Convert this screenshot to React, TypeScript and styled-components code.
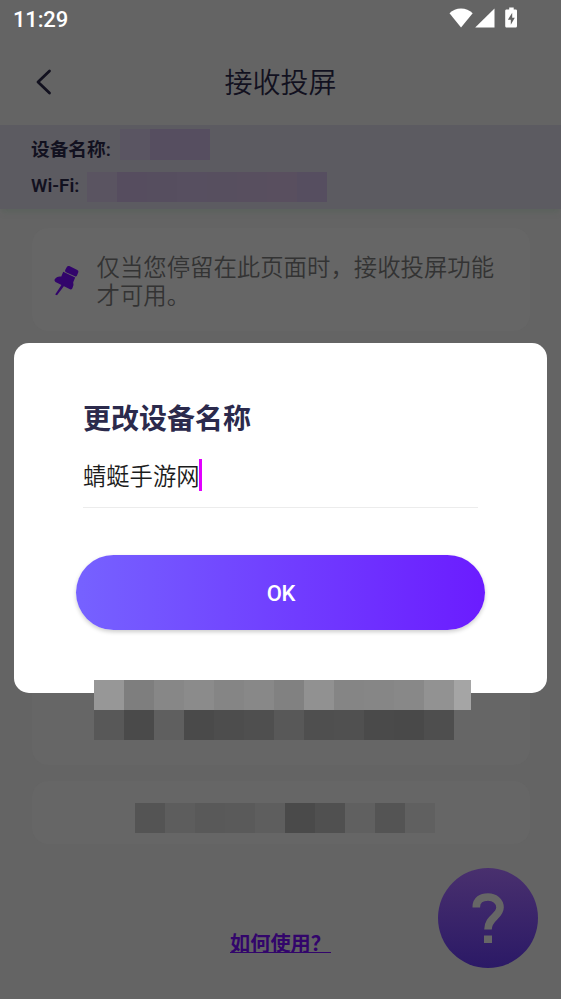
import React from "react";
import styled, { createGlobalStyle } from "styled-components";

const GlobalStyle = createGlobalStyle`
  * { box-sizing: border-box; }
  body {
    margin: 0;
    background: #646464;
    font-family: Roboto, "Noto Sans CJK SC", sans-serif;
  }
`;

const Screen = styled.div`
  position: relative;
  width: 561px;
  height: 999px;
  overflow: hidden;
  background: #646464;
  display: flex;
  flex-direction: column;
`;

const StatusBar = styled.div`
  height: 39px;
  flex: none;
  padding: 0 43px 0 13px;
  display: flex;
  align-items: center;
  justify-content: space-between;
  color: #fff;
`;

const Clock = styled.span`
  font-size: 22px;
  line-height: 39px;
  font-weight: 500;
  letter-spacing: -0.15px;
`;

const StatusIcons = styled.svg`
  width: 70px;
  height: 22px;
  margin-bottom: 3px;
  display: block;
`;

const Header = styled.header`
  height: 86px;
  flex: none;
  display: grid;
  grid-template-columns: 88px 1fr 88px;
  align-items: center;
`;

const BackButton = styled.button`
  border: 0;
  background: none;
  padding: 0 0 0 35px;
  height: 28px;
  display: flex;
`;

const PageTitle = styled.h1`
  margin: 0;
  padding-top: 4px;
  font-size: 28px;
  font-weight: 350;
  line-height: 40px;
  color: #12111f;
  text-align: center;
`;

const DeviceBand = styled.section`
  height: 84px;
  flex: none;
  padding: 4px 0 0 31px;
  background: #5c5b61;
  box-shadow: 0 5px 5px -2px rgba(90, 98, 92, 0.9);
`;

const DeviceRow = styled.div<{ $height: number }>`
  display: flex;
  align-items: flex-start;
  height: ${(p) => p.$height}px;
`;

const DeviceLabel = styled.span<{ $drop: number; $width: number }>`
  width: ${(p) => p.$width}px;
  flex: none;
  font-size: 18.7px;
  line-height: 28px;
  padding-top: ${(p) => p.$drop}px;
  font-weight: 600;
  color: #12111f;
  white-space: nowrap;
`;

const Mosaic = styled.div`
  display: flex;
`;

const Cell = styled.i<{ $tone: string; $w?: number; $h?: number }>`
  display: block;
  flex: none;
  width: ${(p) => p.$w ?? 30}px;
  height: ${(p) => p.$h ?? 30}px;
  background: ${(p) => p.$tone};
`;

const Cards = styled.main`
  flex: none;
  padding: 19px 31px 0 32px;
  display: flex;
  flex-direction: column;
  gap: 16px;
`;

const Card = styled.section<{ $height: number }>`
  height: ${(p) => p.$height}px;
  border-radius: 16px;
  background: #666;
  display: flex;
`;

const NoticeCard = styled(Card)`
  padding: 25px 0 0 20px;
  gap: 16px;
`;

const PinIcon = styled.svg`
  width: 29px;
  height: 34px;
  margin-top: 10px;
  flex: none;
`;

const NoticeText = styled.p`
  margin: 1px 0 0 -0.5px;
  width: 410px;
  font-size: 23.4px;
  line-height: 28px;
  font-weight: 350;
  color: #333;
`;

const AddressCard = styled(Card)`
  padding: 22px 0 0 103px;
`;

const HelpLink = styled.a`
  align-self: center;
  margin-top: 87px;
  display: block;
  height: 30px;
  font-size: 20.2px;
  line-height: 27px;
  font-weight: 600;
  color: #32056b;
  text-decoration: underline;
  text-decoration-thickness: 1px;
  text-underline-offset: 1px;
  white-space: pre;
`;

const HelpFab = styled.button`
  position: absolute;
  left: 438px;
  top: 868px;
  width: 100px;
  height: 100px;
  padding: 0;
  border: 0;
  border-radius: 50%;
  background: linear-gradient(#49306e, #2b1966);
`;

const Dialog = styled.div`
  position: absolute;
  left: 14px;
  top: 343.4px;
  width: 533px;
  height: 349.2px;
  border-radius: 15px;
  background: #fff;
  padding: 56.6px 62px 0;
  display: flex;
  flex-direction: column;
`;

const DialogTitle = styled.h2`
  margin: 0 7px;
  font-size: 28px;
  line-height: 40px;
  font-weight: 700;
  color: #2b2a4c;
`;

const NameField = styled.div`
  margin: 19px 7px 0;
  height: 49px;
  display: flex;
  border-bottom: 1px solid #ececec;
  font-size: 23.3px;
  line-height: 34px;
  font-weight: 350;
  color: #1c1c1c;
`;

const NameText = styled.span`
  padding-top: 1px;
`;

const Caret = styled.span`
  width: 3px;
  height: 32px;
  background: #e100ff;
`;

const OkButton = styled.button`
  margin-top: 47px;
  width: 409px;
  height: 75px;
  flex: none;
  border: 0;
  border-radius: 38px;
  background: linear-gradient(90deg, #7662ff, #6b1cff);
  box-shadow: 0 2px 4px rgba(0, 0, 0, 0.2);
  color: #fff;
  font-family: inherit;
  font-size: 22px;
  font-weight: 500;
  letter-spacing: -0.2px;
  padding: 2px 0 0 1px;
`;

const HintMosaic = styled.div`
  position: absolute;
  left: 94px;
  top: 680px;
`;

const deviceTones = ["#5a5562", "#564e60", "#564e60"];
const wifiTones = ["#5a5461", "#564d5f", "#564e5f", "#574f60", "#574f5f", "#584f5f", "#594f5f", "#564e60"];
const hintTop = ["#979797", "#7e7e7e", "#878787", "#8b8b8b", "#858585", "#888888", "#818181", "#919191", "#858585", "#868686", "#888888", "#929292"];
const hintBottom = ["#585858", "#4a4a4a", "#5f5f5f", "#4a4a4a", "#4d4d4d", "#4f4f4f", "#585858", "#4f4f4f", "#505050", "#4a4a4a", "#494949", "#4e4e4e"];
const addressTones = ["#545454", "#5d5d5d", "#595959", "#5a5a5a", "#5e5e5e", "#4a4a4a", "#505050", "#606060", "#545454", "#606060"];

const cells = (tones: string[], height = 30) =>
  tones.map((tone, i) => <Cell key={i} $tone={tone} $h={height} />);

export default function App() {
  return (
    <>
      <GlobalStyle />
      <Screen>
        <StatusBar>
          <Clock>11:29</Clock>
          <StatusIcons viewBox="0 0 70 22" fill="#fff">
            <path d="M1.500 6.300C4.500 3.200 8.500 1.500 13 1.500S21.600 3.200 24.700 6.300L13 20.500Z" />
            <path d="M46.500 1.500V20.500H27.200Z" />
            <path fillRule="evenodd" d="M61.200 0.500h4.500v2h2c.8 0 1.300.6 1.300 1.300v15.200c0 .8-.5 1.500-1.300 1.500h-9.200c-.8 0-1.300-.7-1.300-1.500V3.800c0-.7.5-1.300 1.300-1.300h2.700ZM64.200 5.800L59.900 12.700h2.900v5.100l4-7h-2.600Z" />
          </StatusIcons>
        </StatusBar>
        <Header>
          <BackButton aria-label="返回">
            <svg width="18" height="28" viewBox="0 0 18 28" fill="none" stroke="#12111f" strokeWidth="2.8" strokeLinecap="round" strokeLinejoin="round">
              <path d="M14.500 3L3 14L14.500 25" />
            </svg>
          </BackButton>
          <PageTitle>接收投屏</PageTitle>
        </Header>
        <DeviceBand>
          <DeviceRow $height={43}>
            <DeviceLabel $drop={7} $width={89}>设备名称:</DeviceLabel>
            <Mosaic>{cells(deviceTones, 31)}</Mosaic>
          </DeviceRow>
          <DeviceRow $height={30}>
            <DeviceLabel $drop={0} $width={56}>Wi-Fi:</DeviceLabel>
            <Mosaic>{cells(wifiTones)}</Mosaic>
          </DeviceRow>
        </DeviceBand>
        <Cards>
          <NoticeCard $height={103}>
            <PinIcon viewBox="0 0 29 34" fill="#32056b">
              <path d="M17.300 3.100L25.300 7Q26.900 7.900 26.300 9.300L25 12.500Q24.300 14 22.900 13.300L14 9.300Q12.500 8.600 13.200 7.100L14.700 4.200Q15.700 2.400 17.300 3.100Z" />
              <path d="M11.200 8.700L23.200 14.400L21.200 19.300Q22.200 22.300 20.400 25.200Q19.300 27 17.500 26.100L3.500 19Q2 18 2.700 16.300Q4.800 12.800 9.300 13.500Z" />
              <path d="M10.100 21L12.600 22.300L5 32.200L3.200 31.400Z" />
            </PinIcon>
            <NoticeText>仅当您停留在此页面时，接收投屏功能才可用。</NoticeText>
          </NoticeCard>
          <Card $height={418} />
          <AddressCard $height={63}>
            <Mosaic>{cells(addressTones)}</Mosaic>
          </AddressCard>
        </Cards>
        <HelpLink>如何使用？</HelpLink>
        <HelpFab aria-label="帮助">
          <svg width="100" height="100" viewBox="0 0 100 100">
            <path d="M38.300 39.500V39C38.300 32 43.500 29 50 29S62 33 62 39.500C62 48.500 50 49.500 50 61.500" fill="none" stroke="#666" strokeWidth="7.600" />
            <rect x="46" y="67.500" width="8" height="7.500" fill="#666" />
          </svg>
        </HelpFab>
        <Dialog role="dialog">
          <DialogTitle>更改设备名称</DialogTitle>
          <NameField>
            <NameText>蜻蜓手游网</NameText>
            <Caret />
          </NameField>
          <OkButton>OK</OkButton>
        </Dialog>
        <HintMosaic>
          <Mosaic>
            {cells(hintTop)}
            <Cell $tone="#a5a5a5" $w={17} />
          </Mosaic>
          <Mosaic>{cells(hintBottom)}</Mosaic>
        </HintMosaic>
      </Screen>
    </>
  );
}
